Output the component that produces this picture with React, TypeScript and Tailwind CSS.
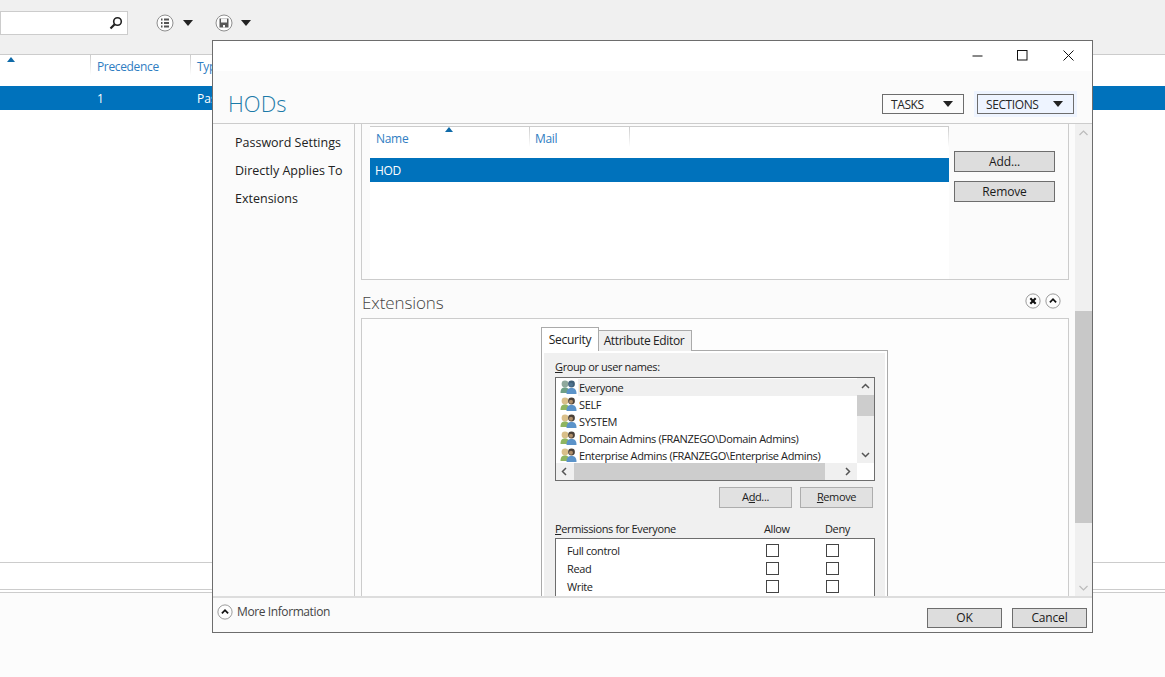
const FONT = "font-['Open_Sans','Noto_Sans',sans-serif]";

function SortArrow() {
  return (
    <svg width="8" height="5" viewBox="0 0 8 5" className="block">
      <path d="M4 0 L8 5 L0 5 Z" fill="#0f6aa8" />
    </svg>
  );
}

function Caret({ size = 9 }: { size?: number }) {
  return (
    <svg width={size} height={size * 0.6} viewBox="0 0 10 6" className="block">
      <path d="M0 0 H10 L5 6 Z" fill="#222" />
    </svg>
  );
}

function CircleButton({ children, size = 18 }: { children: React.ReactNode; size?: number }) {
  return (
    <svg width={size} height={size} viewBox="0 0 18 18" className="block shrink-0">
      <circle cx="9" cy="9" r="8" fill="#fdfdfd" stroke="#8f8f8f" strokeWidth="1" />
      {children}
    </svg>
  );
}

// column separator that fades out downwards
function FadeLine({ className = "" }: { className?: string }) {
  return <div className={`h-[20px] w-px shrink-0 bg-gradient-to-b from-[#cccccc] to-white ${className}`} />;
}

function UsersIcon({ muted }: { muted?: boolean }) {
  const skin = muted ? "#8fa89c" : "#d9bf8a";
  const backBody = muted ? "#6f9f86" : "#8fb561";
  const hair = muted ? "#3f5f78" : "#4a4038";
  return (
    <svg width="17" height="15" viewBox="0 0 17 15" className="block shrink-0">
      <circle cx="5" cy="4" r="3.4" fill={skin} />
      <path d="M0.5 13 C0.5 8.5 2.5 7.5 5 7.5 C7.5 7.5 9 8.5 9 13 Z" fill={backBody} />
      <circle cx="11.5" cy="4" r="3.4" fill={hair} />
      <circle cx="11" cy="4.8" r="2" fill={muted ? "#4f7390" : "#b08f6a"} />
      <path d="M6.5 14 C6.5 9 8.5 8 11.5 8 C14.5 8 16.5 9 16.5 14 Z" fill="#5b93c9" />
    </svg>
  );
}

function DialogButton({ label, className }: { label: string; className: string }) {
  return (
    <div className={`flex items-center justify-center border border-[#6d6d6d] bg-[#dddddd] text-[12px] tracking-[-0.15px] text-[#1a1a1a] ${className}`}>
      {label}
    </div>
  );
}

function DropButton({ label, className }: { label: string; className: string }) {
  return (
    <div className={`flex h-5 items-center justify-between border border-[#6d6d6d] pl-2 pr-[10px] text-[12px] tracking-[-0.4px] text-[#262626] ${className}`}>
      <span className="pt-px">{label}</span>
      <Caret size={10} />
    </div>
  );
}

function Background() {
  return (
    <div className="flex h-full flex-col">
      <div className="flex h-[55px] shrink-0 items-start border-b border-[#cccccc] bg-[#f0f0f0]">
        <div className="mt-[11px] flex h-[24px] w-[128px] items-center justify-end border border-[#cccccc] bg-white pr-1">
          <svg width="14" height="14" viewBox="0 0 14 14" className="block">
            <circle cx="8.5" cy="5.5" r="3.8" fill="none" stroke="#222" strokeWidth="1.6" />
            <path d="M5.7 8.3 L1.5 12.5" stroke="#222" strokeWidth="2.2" />
          </svg>
        </div>
        <div className="ml-[28px] mt-[14px] flex items-center gap-[9px]">
          <CircleButton>
            <path d="M5 5.5h1.5M5 9h1.5M5 12.5h1.5M8 5.5h5M8 9h5M8 12.5h5" stroke="#555" strokeWidth="1.8" />
          </CircleButton>
          <Caret size={10} />
        </div>
        <div className="ml-[22px] mt-[14px] flex items-center gap-[8px]">
          <CircleButton>
            <path d="M4.5 4.5 H13.5 V13.5 H4.5 Z" fill="#555" />
            <path d="M6 4.5 H12 V8.5 H6 Z M8 11 H10 V13.5 H8 Z" fill="#f4f4f4" />
          </CircleButton>
          <Caret size={10} />
        </div>
      </div>
      <div className="relative flex h-[31px] shrink-0 bg-white text-[12px] tracking-[-0.35px] text-[#2f7dc2]">
        <div className="w-[90px] pl-[7px] pt-[2px]">
          <SortArrow />
        </div>
        <FadeLine />
        <div className="w-[99px] pl-[6px] pt-[3px]">Precedence</div>
        <FadeLine />
        <div className="pl-[6px] pt-[3px]">Typ</div>
      </div>
      <div className="flex h-6 shrink-0 items-center bg-[#0072bc] pt-px text-[12px] text-white">
        <span className="ml-[97px] w-[100px]">1</span>
        <span>Pas</span>
      </div>
      <div className="h-[453px] shrink-0 border-b border-[#cccccc] bg-white" />
      <div className="h-[27px] shrink-0 border-b border-[#cccccc] bg-white" />
      <div className="h-[3px] shrink-0 border-b border-[#cccccc] bg-white" />
      <div className="flex-1 bg-[#fcfcfc]" />
    </div>
  );
}

const PRINCIPALS = [
  "Everyone",
  "SELF",
  "SYSTEM",
  "Domain Admins (FRANZEGO\\Domain Admins)",
  "Enterprise Admins (FRANZEGO\\Enterprise Admins)",
];

function SecurityPane() {
  return (
    <div className="ml-[179px] w-[347px]">
      <div className="flex h-[24px] items-end">
        <div className="relative z-10 flex h-[24px] w-[58px] items-center justify-center border border-b-0 border-[#aaaaaa] bg-white text-[12px] tracking-[-0.25px] text-[#222]">
          Security
        </div>
        <div className="flex h-[21px] w-[93px] items-center justify-center border border-b-0 border-l-0 border-[#aaaaaa] bg-[#f0f0f0] pr-[2px] text-[12px] tracking-[-0.35px] text-[#222]">
          Attribute Editor
        </div>
      </div>
      <div className="-mt-px border border-[#aaaaaa] bg-white p-[2px]">
        <div className="h-[260px] bg-[#f0f0f0] pl-[11px] pt-[7px] text-[11px] tracking-[-0.38px] text-[#222]">
          <div className="h-[17px] leading-[14px]"><u>G</u>roup or user names:</div>
          <div className="h-[104px] w-[320px] border border-[#6d6d6d] bg-white">
            <div className="flex h-[85px]">
              <div className="w-[301px] overflow-hidden pl-[4px] pt-[1px]">
                {PRINCIPALS.map((name, i) => (
                  <div key={name} className="flex h-[17px] items-center">
                    <UsersIcon muted={i === 0} />
                    <span className={`ml-px flex h-full w-[279px] items-center whitespace-nowrap pl-px pt-px ${i === 0 ? "bg-[#f0f0f0]" : ""}`}>
                      {name}
                    </span>
                  </div>
                ))}
              </div>
              <div className="flex w-[17px] flex-col items-center bg-[#f0f0f0]">
                <svg width="17" height="17" viewBox="0 0 17 17" className="block shrink-0">
                  <path d="M5 10 L8.5 6.5 L12 10" fill="none" stroke="#555" strokeWidth="1.5" />
                </svg>
                <div className="h-[21px] w-full bg-[#cdcdcd]" />
                <div className="flex-1" />
                <svg width="17" height="17" viewBox="0 0 17 17" className="block shrink-0">
                  <path d="M5 7 L8.5 10.5 L12 7" fill="none" stroke="#555" strokeWidth="1.5" />
                </svg>
              </div>
            </div>
            <div className="flex h-[17px] w-[301px] items-center bg-[#f0f0f0]">
              <svg width="18" height="17" viewBox="0 0 18 17" className="block shrink-0">
                <path d="M10 5 L6.5 8.5 L10 12" fill="none" stroke="#555" strokeWidth="1.5" />
              </svg>
              <div className="h-full flex-1 bg-[#cdcdcd]" />
              <svg width="32" height="17" viewBox="0 0 32 17" className="block shrink-0">
                <path d="M21 5 L24.5 8.5 L21 12" fill="none" stroke="#555" strokeWidth="1.5" />
              </svg>
            </div>
          </div>
          <div className="mt-[6px] flex w-[318px] justify-end gap-2">
            <div className="flex h-[21px] w-[73px] items-center justify-center border border-[#adadad] bg-[#e1e1e1]">
              A<u>d</u>d...
            </div>
            <div className="flex h-[21px] w-[73px] items-center justify-center border border-[#adadad] bg-[#e1e1e1]">
              <u>R</u>emove
            </div>
          </div>
          <div className="mt-[13px] flex h-[17px] w-[320px] items-center">
            <span className="w-[209px]"><u>P</u>ermissions for Everyone</span>
            <span className="w-[61px]">Allow</span>
            <span>Deny</span>
          </div>
          <div className="h-[80px] w-[320px] border border-[#6d6d6d] bg-white pl-[11px] pt-[3px]">
            {["Full control", "Read", "Write"].map((perm) => (
              <div key={perm} className="flex h-[18px] items-center">
                <span className="w-[199px]">{perm}</span>
                <span className="mb-[2px] h-[13px] w-[13px] border border-[#444]" />
                <span className="mb-[2px] ml-[47px] h-[13px] w-[13px] border border-[#444]" />
              </div>
            ))}
          </div>
        </div>
      </div>
    </div>
  );
}

function Dialog() {
  return (
    <div className="absolute left-[212px] top-[40px] flex h-[593px] w-[881px] flex-col border border-[#6d6d6d] bg-[#fbfbfb]">
      {/* Title bar */}
      <div className="flex h-[30px] shrink-0 items-center justify-end bg-white pb-[2px] pr-[18px]">
        <svg width="11" height="11" viewBox="0 0 11 11" className="mr-[34px] block">
          <path d="M0.5 6 H10.5" stroke="#111" strokeWidth="1" />
        </svg>
        <svg width="11" height="11" viewBox="0 0 11 11" className="mr-[35px] block">
          <rect x="0.5" y="0.5" width="9.5" height="9.5" fill="none" stroke="#111" strokeWidth="1" />
        </svg>
        <svg width="11" height="11" viewBox="0 0 11 11" className="block">
          <path d="M0.5 0.5 L10.5 10.5 M10.5 0.5 L0.5 10.5" stroke="#111" strokeWidth="1" />
        </svg>
      </div>

      {/* Header */}
      <div className="flex h-[53px] shrink-0 items-end border-b border-[#cccccc] pl-[15px] pr-[15px]">
        <span className="mb-[4px] text-[22px] font-light leading-[32px] text-[#1b7aa8]">HODs</span>
        <div className="mb-[6px] ml-auto flex items-center">
          <DropButton label="TASKS" className="w-[82px]" />
          <div className="ml-[10px] bg-[#eef4ff] p-[3px]">
            <DropButton label="SECTIONS" className="w-[97px]" />
          </div>
        </div>
      </div>

      {/* Body */}
      <div className="flex min-h-0 flex-1">
        <div className="w-[142px] shrink-0 border-r border-[#cccccc] pl-[22px] pt-[5px] text-[12.5px] text-[#222]">
          <div className="h-[28px] leading-[28px]">Password Settings</div>
          <div className="h-[28px] leading-[28px]">Directly Applies To</div>
          <div className="h-[28px] leading-[28px]">Extensions</div>
        </div>
        <div className="ml-[6px] w-[708px] shrink-0 overflow-hidden">
          <div className="flex h-[156px] border-x border-b border-[#cccccc] bg-[#fbfbfb]">
            <div className="ml-[8px] mt-[2px] w-[579px] bg-white">
              <div className="relative flex h-[32px] border-t border-[#cccccc] text-[12px] tracking-[-0.3px] text-[#2f7dc2]">
                <div className="w-[159px] pl-[6px] pt-[3px]">Name</div>
                <FadeLine />
                <div className="w-[99px] pl-[5px] pt-[3px]">Mail</div>
                <FadeLine />
                <div className="flex-1" />
                <FadeLine />
                <div className="absolute left-[75px] top-0">
                  <SortArrow />
                </div>
              </div>
              <div className="flex h-6 items-center bg-[#0072bc] pl-[5px] pt-[2px] text-[12px] tracking-[-0.3px] text-white">HOD</div>
            </div>
            <div className="flex flex-1 flex-col pl-[5px] pt-[27px]">
              <DialogButton label="Add..." className="h-[21px] w-[101px]" />
              <DialogButton label="Remove" className="mt-[9px] h-[21px] w-[101px]" />
            </div>
          </div>
          <div className="flex h-[38px] items-center justify-between pr-[8px]">
            <span className="ml-px mt-[8px] text-[17px] font-light tracking-[-0.1px] text-[#444]">Extensions</span>
            <div className="mt-[4px] flex items-center gap-[4px]">
              <CircleButton size={16}>
                <path d="M6 6 L12 12 M12 6 L6 12" stroke="#111" strokeWidth="2.4" />
              </CircleButton>
              <CircleButton size={16}>
                <path d="M5.5 10.5 L9 7 L12.5 10.5" fill="none" stroke="#111" strokeWidth="2" />
              </CircleButton>
            </div>
          </div>
          <div className="h-[300px] border border-[#cccccc] bg-[#fdfdfd] pt-[8px]">
            <SecurityPane />
          </div>
        </div>
        <div className="ml-[6px] flex w-[17px] shrink-0 flex-col bg-[#f0f0f0]">
          <svg width="17" height="17" viewBox="0 0 17 17" className="block shrink-0">
            <path d="M4.5 11 L8.5 7 L12.5 11" fill="none" stroke="#bbb" strokeWidth="1.2" />
          </svg>
          <div className="h-[170px] shrink-0" />
          <div className="h-[212px] shrink-0 bg-[#c8c8c8]" />
          <div className="flex-1" />
          <svg width="17" height="17" viewBox="0 0 17 17" className="block shrink-0">
            <path d="M4.5 7 L8.5 11 L12.5 7" fill="none" stroke="#bbb" strokeWidth="1.2" />
          </svg>
        </div>
      </div>

      {/* Footer */}
      <div className="flex h-[36px] shrink-0 items-center border-t-2 border-t-[#dddddd] bg-[#fbfbfb] pl-[4px] pr-[5px]">
        <div className="mb-[6px] flex items-center">
          <CircleButton size={16}>
            <path d="M5.5 10.5 L9 7 L12.5 10.5" fill="none" stroke="#111" strokeWidth="2" />
          </CircleButton>
          <span className="ml-[4px] text-[12px] tracking-[-0.4px] text-[#444]">More Information</span>
        </div>
        <div className="ml-auto flex items-center gap-[10px]">
          <DialogButton label="OK" className="mt-[6px] h-[20px] w-[75px]" />
          <DialogButton label="Cancel" className="mt-[5px] h-[20px] w-[75px]" />
        </div>
      </div>
    </div>
  );
}

export default function App() {
  return (
    <div className={`relative h-[677px] w-[1165px] overflow-hidden ${FONT}`}>
      <Background />
      <Dialog />
    </div>
  );
}
